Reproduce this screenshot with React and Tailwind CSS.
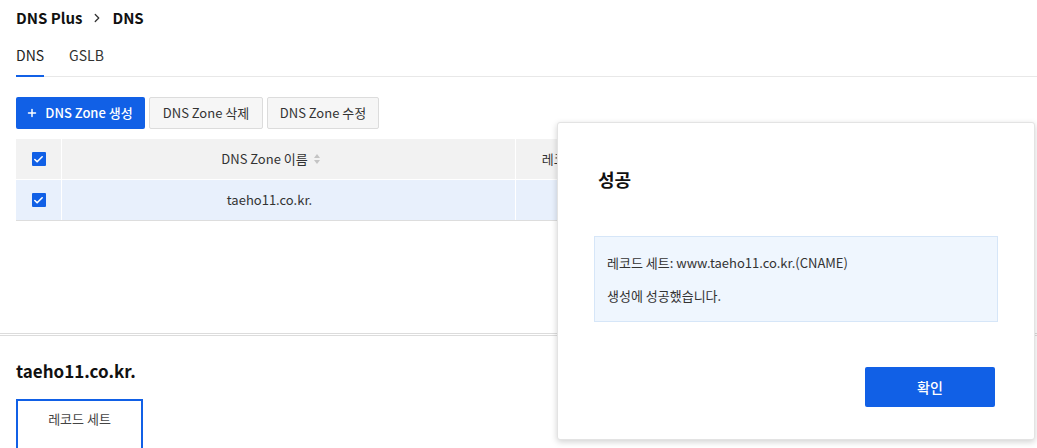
import { Plus, ChevronRight, Check } from 'lucide-react'

function CheckBox() {
  return (
    <span className="flex h-[14px] w-[14px] items-center justify-center rounded-[1px] bg-[#1160e6]">
      <Check size={11} strokeWidth={3.5} className="text-white" />
    </span>
  )
}

function SortIcon() {
  return (
    <svg width="6" height="10" viewBox="0 0 6 10" className="text-[#c4c4c4]">
      <path d="M3 0 L6 4 L0 4 Z" fill="currentColor" />
      <path d="M0 6 L6 6 L3 10 Z" fill="currentColor" />
    </svg>
  )
}

function SuccessModal() {
  return (
    <div className="absolute left-[557px] top-[122px] flex h-[318px] w-[478px] flex-col rounded-[3px] border border-[#e3e3e3] bg-white shadow-[0_2px_6px_rgba(0,0,0,0.18)]">
      <h2 className="ml-[40px] mt-[43px] text-[18px] font-bold leading-[26px] text-[#111]">성공</h2>
      <div className="mx-[36px] mt-[44px] h-[86px] border border-[#d6e6f8] bg-[#eff6fe] px-[12px] pt-[16px] text-[13px] leading-[20px] text-[#333]">
        <p>레코드 세트: www.taeho11.co.kr.(CNAME)</p>
        <p className="mt-[13px]">생성에 성공했습니다.</p>
      </div>
      <div className="mr-[39px] mt-[45px] flex justify-end">
        <button className="h-[40px] w-[130px] rounded-[2px] bg-[#1160e6] text-[14px] font-medium text-white">
          확인
        </button>
      </div>
    </div>
  )
}

export default function App() {
  return (
    <div className="relative h-[448px] w-[1037px] overflow-hidden bg-white font-['Noto_Sans_CJK_KR','Noto_Sans',sans-serif] text-[#222]">
      <div className="pl-[16px]">
        <div className="flex h-[36px] items-center gap-[8px] text-[15px] font-semibold text-[#111]">
          <span>DNS Plus</span>
          <ChevronRight size={14} strokeWidth={2.2} className="text-[#333]" />
          <span>DNS</span>
        </div>

        <div className="mt-[5px] flex gap-[25px] border-b border-[#e8e8e8] text-[14px]">
          <div className="-mb-px border-b-2 border-[#1160e6] pb-[6px] leading-[28px]">DNS</div>
          <div className="pb-[6px] leading-[28px] text-[#333]">GSLB</div>
        </div>
      </div>

      <div className="px-[16px]">
        <div className="mt-[20px] flex gap-[4px] text-[13px]">
          <button className="flex h-[32px] w-[129px] items-center justify-center gap-[7px] rounded-[2px] bg-[#1160e6] pr-[2px] font-medium text-white">
            <Plus size={12} strokeWidth={3} />
            DNS Zone 생성
          </button>
          <button className="h-[32px] w-[114px] rounded-[2px] border border-[#dcdcdc] bg-[#f6f6f6] text-[#333]">
            DNS Zone 삭제
          </button>
          <button className="h-[32px] w-[112px] rounded-[2px] border border-[#dcdcdc] bg-[#f6f6f6] text-[#333]">
            DNS Zone 수정
          </button>
        </div>

        <div className="mt-[10px] text-[13px] text-[#333]">
          <div className="grid h-[41px] grid-cols-[46px_454px_130px_1fr] border-b border-white bg-[#f2f2f2]">
            <div className="flex items-center justify-center border-r border-white"><CheckBox /></div>
            <div className="flex items-center justify-center gap-[6px] border-r border-white pr-[36px]">
              <span>DNS Zone 이름</span>
              <SortIcon />
            </div>
            <div className="flex items-center justify-center border-r border-white">레코드 세트 수</div>
            <div className="flex items-center justify-center">생성 일시</div>
          </div>
          <div className="grid h-[41px] grid-cols-[46px_454px_130px_1fr] border-b border-[#dddddd] bg-[#e8f0fc]">
            <div className="flex items-center justify-center border-r border-white"><CheckBox /></div>
            <div className="flex items-center justify-center border-r border-white pr-[38px]">taeho11.co.kr.</div>
            <div className="flex items-center justify-center border-r border-white">1</div>
            <div className="flex items-center justify-center">2021-06-01</div>
          </div>
        </div>
      </div>

      <div className="mt-[112px] h-[3px] border-y border-[#dcdcdc]" />

      <div className="px-[16px]">
        <h1 className="mt-[22px] text-[17px] font-bold leading-[26px] text-[#111]">taeho11.co.kr.</h1>
        <div className="mt-[15px] flex h-[50px] w-[127px] justify-center border-x-2 border-t-2 border-[#1160e6] pt-[8px] text-[13px] text-[#444]">
          레코드 세트
        </div>
      </div>

      <SuccessModal />
    </div>
  )
}
